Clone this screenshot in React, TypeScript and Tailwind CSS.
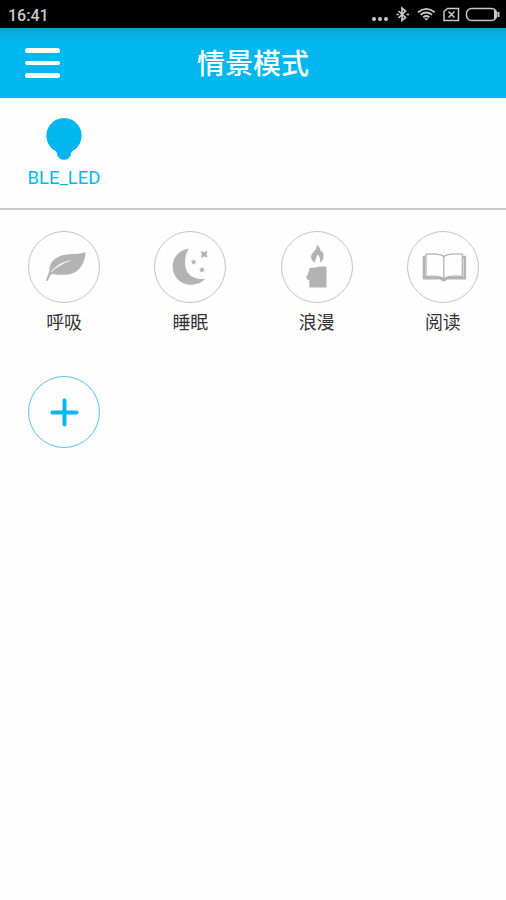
import React from 'react';

interface Scene {
  name: string;
  icon: React.ReactNode;
}

const LeafIcon = () => (
  <svg viewBox="0 0 72 72" className="-m-px h-[72px] w-[72px]" fill="#b3b3b3">
    <path d="M57.500 21C49.500 24.300 41 22 33 24.700C25 27.500 21.500 32.500 21.500 39.500C20.500 42.500 19 46 18 49.700L19.600 50C21 47 22 45 23.500 43.300C28 43.500 34 44.300 41 43.400C50.500 42 57 33 57.500 21Z" />
    <path d="M22.800 41.200C27 35.500 34 31 42.500 29.500C34.500 32.300 27.500 36.500 22.800 41.200Z" fill="#fff" stroke="#fff" strokeWidth=".4" />
  </svg>
);

const MoonIcon = () => (
  <svg viewBox="-.7 0 72 72" className="-m-px h-[72px] w-[72px]" fill="#b3b3b3">
    <path d="M34.300 17.700C25 18.500 18 26 18 35.500C18 46 26 53.700 35.500 53.700C42 53.700 47.500 51.500 50.600 47.700C38 49.500 30.300 43 30.300 31.500C30.300 26 31.500 21.500 34.300 17.700Z" />
    <path d="M46 19.800L49.300 21.300L52.800 19.800L51.700 23.200L53 26.500L49.500 25.400L46.200 27.200L47.200 23.500Z" />
    <path d="M39 28L39.900 29.800L41.900 30.100L40.400 31.500L40.800 33.500L39 32.500L37.200 33.500L37.600 31.500L36.100 30.100L38.100 29.800Z" />
    <path d="M47.300 35.800L48.200 37.600L50.300 38L48.800 39.500L49.200 41.600L47.300 40.600L45.400 41.600L45.800 39.500L44.400 38L46.400 37.600Z" />
  </svg>
);

const CandleIcon = () => (
  <svg viewBox="0 0 72 72" className="-m-px h-[72px] w-[72px]" fill="#b3b3b3">
    <path d="M35.500 13.500C38.500 15.500 39.800 18 39.500 21L40.900 19.700C43.500 24 43.300 29 38.800 31.800C39.700 28.500 39 26 36.500 23.500C36.300 26 33.800 27.500 34.200 31.800C29.300 29.300 29 25 31.800 21.800C34.500 19 36.200 17 35.500 13.500Z" />
    <path d="M28.300 37C32 36.200 34 36.800 36 35.900C39 35.200 42 35.500 45.500 35.800V56.500H28.300V49.200C26.500 49 25.300 47.800 25.300 46.200C25.300 44.800 26.500 44.200 27.100 43.500C26.300 41.500 27.800 40.500 28.300 39.500Z" />
  </svg>
);

const BookIcon = () => (
  <svg viewBox="0 0 72 72" className="-m-px h-[72px] w-[72px]" fill="none" stroke="#b3b3b3">
    <path d="M18.500 26H17V47.300H33.500Q36.800 50.500 40 47.300H57.800V26H55.500" strokeWidth="2.600" />
    <path d="M36.800 25.500C33 22.300 26 22.500 19 23.200V45.500C26 44.800 33 44.700 36.800 47.500C40.500 44.700 48 44.800 55.300 45.500V23.200C48 22.500 40.500 22.300 36.800 25.500Z" fill="#fefefe" strokeWidth="1.300" />
    <path d="M36.800 25.500V47.500" strokeWidth="1.300" />
  </svg>
);

const scenes: Scene[] = [
  { name: '呼吸', icon: <LeafIcon /> },
  { name: '睡眠', icon: <MoonIcon /> },
  { name: '浪漫', icon: <CandleIcon /> },
  { name: '阅读', icon: <BookIcon /> },
];

const StatusBar = () => (
  <div className="flex h-7 items-center justify-between bg-black pl-2 pr-1.5 text-[#c8c8c8]">
    <span className="pt-[3px] font-['Roboto',sans-serif] text-base font-medium leading-none">16:41</span>
    <svg viewBox="0 0 130 28" className="h-7 w-[130px]" fill="none" stroke="currentColor" strokeWidth="1.500">
      <g fill="currentColor" stroke="none">
        <circle cx="4" cy="19" r="2" />
        <circle cx="10" cy="19" r="2" />
        <circle cx="16" cy="19" r="2" />
      </g>
      <path d="M28.500 11L35.500 17.500L32 20.500V8L35.500 11L28.500 18M26.500 14.500H29M36.500 14.500H39" strokeWidth="1.700" />
      <path d="M48 12.300Q56.300 5.500 64.700 12.300M50.600 14.800Q56.300 10.300 62 14.800M53.200 17.200Q56.300 14.800 59.400 17.200" strokeWidth="1.800" />
      <path d="M54 18.300L56.300 20.800L58.600 18.300Z" fill="currentColor" stroke="none" />
      <path d="M77.500 8.500H88.500V20.500H74V11.500ZM78.500 11.500L84.500 17.500M84.500 11.500L78.500 17.500" />
      <rect x="96.500" y="8.500" width="30" height="12" rx="5" />
      <path d="M125 10V19M128.500 12V17" strokeWidth="2" />
    </svg>
  </div>
);

const Header = () => (
  <header className="grid h-[70px] grid-cols-[1fr_auto_1fr] items-center bg-[#02b7f0] bg-linear-to-b from-[#08a5d8] to-[#02b7f0] to-[18%] px-[25px]">
    <button aria-label="菜单" className="flex w-[35px] flex-col gap-2">
      <span className="h-[4.5px] rounded-full bg-white" />
      <span className="h-[4.5px] rounded-full bg-white" />
      <span className="h-[4.5px] rounded-full bg-white" />
    </button>
    <h1 className="pb-[3px] font-['Noto_Sans_CJK_SC',sans-serif] text-[28px] font-medium leading-none text-white">情景模式</h1>
  </header>
);

const Device = () => (
  <section className="flex h-28 border-b-2 border-[#c9c9c9] pl-[27px] pt-5">
    <div className="flex w-[74px] flex-col items-center text-[#02b7f0]">
      <svg viewBox="0 0 38 44" className="h-11 w-[38px]" fill="currentColor">
        <path d="M19 0A17.700 17.700 0 0 1 27.500 33.200Q26 34.100 26 35.500A7 6.300 0 0 1 12 35.500Q12 34.100 10.500 33.200A17.700 17.700 0 0 1 19 0Z" />
      </svg>
      <span className="mt-1 whitespace-nowrap font-['Roboto',sans-serif] text-[18.500px] leading-6">BLE_LED</span>
    </div>
  </section>
);

const App = () => {
  return (
    <div className="h-[900px] w-[506px] overflow-hidden bg-[#fefefe]">
      <StatusBar />
      <Header />
      <Device />
      <div className="grid grid-cols-4 pl-px pt-[21px]">
        {scenes.map((scene) => (
          <div key={scene.name} className="flex h-[145px] flex-col items-center">
            <div className="h-[72px] w-[72px] rounded-full border border-[#c4c4c4]">{scene.icon}</div>
            <span className="mt-1.5 font-['Noto_Sans_CJK_SC',sans-serif] text-[18px] leading-6 text-[#333]">{scene.name}</span>
          </div>
        ))}
        <div className="flex justify-center">
          <button aria-label="添加" className="h-[72px] w-[72px] rounded-full border border-[#55c3ea] text-[#02b7f0]">
            <svg viewBox="0 0 70 70" className="h-full w-full" stroke="currentColor" strokeWidth="4" strokeLinecap="round">
              <path d="M35.500 23.500V47.500M23.500 35.500H47.500" />
            </svg>
          </button>
        </div>
      </div>
    </div>
  );
};

export default App;
